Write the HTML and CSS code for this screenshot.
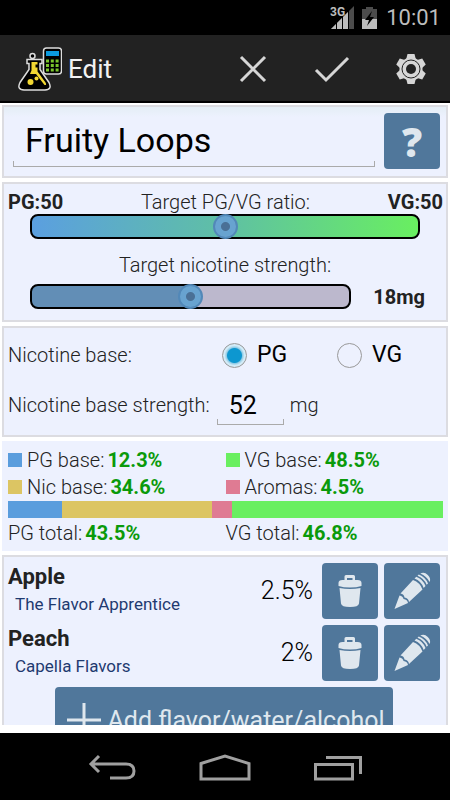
FILE: index.html
```html
<!DOCTYPE html>
<html lang="en">
<head>
    <meta charset="UTF-8">
    <meta name="viewport" content="width=device-width, initial-scale=1.0">
    <title>Edit - Fruity Loops</title>
    <link rel="stylesheet" href="styles.css">
</head>
<body>

<svg width="0" height="0" class="symbols">
    <symbol id="trash" viewBox="0 0 56 56">
        <path d="M22.500 17v-3.500q0-1.500 1.500-1.500h7.500q1.500 0 1.500 1.500V17h-2.500v-2H25v2z"/>
        <path d="M16.500 23v-3q0-3 4-3h15q4 0 4 3v3q-5 1.500-11.500 1.500T16.500 23z"/>
        <path d="M17.500 25q10.500 2 21 0l-1.500 15.500q-.5 3.500-9 3.500t-9-3.500z"/>
    </symbol>
    <symbol id="pencil" viewBox="0 0 56 56">
        <path d="M10.500 46l5-13.500q3.500.5 4 3.500 4 .5 4.500 4z"/>
        <path d="M16.500 30.500L29 17q7 2.500 9.500 9.500L25 39q-.5-4-4.500-4.500-.5-3.500-4-4z"/>
        <path d="M30.500 15.500l1.800-1.800q6.500 2.500 9.200 9.200L39.700 25q-2.500-7-9.200-9.500z"/>
        <path d="M33.500 12.700l1.300-1.300q6.500 2.500 9.200 9L42.700 21.700q-2.700-6.500-9.200-9z"/>
        <path d="M36.300 10.500q4-2 7.500 1.500t1.800 7q-3-6-9.300-8.500z"/>
    </symbol>
</svg>

<div class="status-bar">
    <svg class="signal" width="24" height="24" viewBox="0 0 24 24">
        <path d="M1 23L24 0v23z" fill="#4c4c4c"/>
        <path d="M1 23L18 6v17z" fill="#bdbdbd"/>
        <path d="M6.500 15v8M12.500 9v14M18.500 4v19" stroke="#000"/>
        <rect width="13" height="11" fill="#000"/>
        <text x="0" y="10">3G</text>
    </svg>
    <svg width="16" height="22" viewBox="0 0 16 22">
        <path d="M4 0h7v2h4v10H0V2h4z" fill="#4c4c4c"/>
        <path d="M0 12h15v10H0z" fill="#bdbdbd"/>
        <path d="M10 4L3 13h4l-2 6 7-9H8z" fill="#000"/>
    </svg>
    <span class="clock">10:01</span>
</div>

<header class="app-bar">
    <svg class="logo" width="44" height="44" viewBox="0 0 44 44">
        <rect x="25.500" y="1" width="18" height="26" rx="3" fill="#000" stroke="#ddd" stroke-width="1.500"/>
        <rect x="28" y="4" width="13" height="5" fill="#0b9ade"/>
        <path d="M28 14h13M28 18.500h13M28 23h13" stroke="#7ac52c" stroke-width="3" stroke-dasharray="3 1.800"/>
        <circle cx="14.500" cy="9" r="2.500" fill="#000" stroke="#ddd" stroke-width="1.500"/>
        <path d="M9 12.500h15v4h-2v6l9 13q3.500 7-4 7.500H6q-7.500-.5-4-7.500l9-13v-6H9z" fill="#000" stroke="#ddd" stroke-width="1.500"/>
        <path d="M13.500 15h6v2.500h-2v3h2v4l8 11q1.500 3-1 2.500l-8.500-11H12l1.500-3.500z" fill="#f1d733"/>
        <circle cx="12.500" cy="35" r="3" fill="#f1d733"/>
        <circle cx="18.500" cy="31.500" r="2" fill="#f1d733"/>
    </svg>
    <h1>Edit</h1>
    <div class="actions">
        <button type="button" aria-label="Cancel">
            <svg width="32" height="32" viewBox="0 0 32 32"><path d="M4 4l24 24M28 4L4 28"/></svg>
        </button>
        <button type="button" aria-label="Save">
            <svg width="36" height="32" viewBox="0 0 36 32"><path d="M2 17l10 10L34 5"/></svg>
        </button>
        <button type="button" aria-label="Settings">
            <svg width="32" height="32" viewBox="0 0 32 32">
                <g fill="#d6d6d6" stroke="none">
                    <circle cx="16" cy="16" r="11.500"/>
                    <path id="tooth" d="M11 7l1.500-6h7L21 7v18l-1.500 6h-7L11 25z"/>
                    <use href="#tooth" transform="rotate(60 16 16)"/>
                    <use href="#tooth" transform="rotate(120 16 16)"/>
                </g>
                <circle cx="16" cy="16" r="9" class="ring"/>
                <circle cx="16" cy="16" r="5" class="hole"/>
            </svg>
        </button>
    </div>
</header>

<main>
    <section class="card title-card">
        <input type="text" class="recipe-name" value="Fruity Loops" aria-label="Recipe name">
        <button type="button" class="square help">?</button>
    </section>

    <section class="card targets">
        <div class="ratio-head">
            <b>PG:50</b>
            <label for="ratio">Target PG/VG ratio:</label>
            <b>VG:50</b>
        </div>
        <input type="range" id="ratio" class="slider ratio" min="0" max="100" value="50">
        <label for="strength" class="strength-label">Target nicotine strength:</label>
        <div class="strength-row">
            <input type="range" id="strength" class="slider strength" min="0" max="36" value="18">
            <b>18mg</b>
        </div>
    </section>

    <section class="card nicotine">
        <div class="nic-row">
            <span class="nic-label">Nicotine base:</span>
            <label class="option"><input type="radio" name="base" checked>PG</label>
            <label class="option"><input type="radio" name="base">VG</label>
        </div>
        <div class="nic-row">
            <label for="base-strength">Nicotine base strength:</label>
            <input type="text" id="base-strength" value="52">
            <span>mg</span>
        </div>
    </section>

    <section class="card summary">
        <div class="legend">
            <div><i class="pg"></i>PG base:<b>12.3%</b></div>
            <div><i class="vg"></i>VG base:<b>48.5%</b></div>
            <div><i class="nic"></i>Nic base:<b>34.6%</b></div>
            <div><i class="aroma"></i>Aromas:<b>4.5%</b></div>
        </div>
        <div class="bar">
            <div class="pg" style="flex-grow: 12.3"></div>
            <div class="nic" style="flex-grow: 34.6"></div>
            <div class="aroma" style="flex-grow: 4.5"></div>
            <div class="vg" style="flex-grow: 48.5"></div>
        </div>
        <div class="legend totals">
            <div>PG total:<b>43.5%</b></div>
            <div>VG total:<b>46.8%</b></div>
        </div>
    </section>

    <section class="card flavors">
        <div class="flavor">
            <div class="flavor-name">
                <h2>Apple</h2>
                <p>The Flavor Apprentice</p>
            </div>
            <span class="percent">2.5%</span>
            <button type="button" class="square" aria-label="Delete Apple"><svg><use href="#trash"/></svg></button>
            <button type="button" class="square" aria-label="Edit Apple"><svg><use href="#pencil"/></svg></button>
        </div>
        <div class="flavor">
            <div class="flavor-name">
                <h2>Peach</h2>
                <p>Capella Flavors</p>
            </div>
            <span class="percent">2%</span>
            <button type="button" class="square" aria-label="Delete Peach"><svg><use href="#trash"/></svg></button>
            <button type="button" class="square" aria-label="Edit Peach"><svg><use href="#pencil"/></svg></button>
        </div>
        <button type="button" class="add">
            <svg width="34" height="34" viewBox="0 0 34 34"><path d="M0 17h34M17 0v34" stroke="#dfe7ee" stroke-width="3"/></svg>
            Add flavor/water/alcohol
        </button>
    </section>
</main>

<nav class="nav-bar">
    <button type="button" aria-label="Back">
        <svg width="48" height="28" viewBox="0 0 48 28"><path d="M11 2L3 10l8 8M3 10h35q8 0 8 7t-8 7H22"/></svg>
    </button>
    <button type="button" aria-label="Home">
        <svg width="52" height="28" viewBox="0 0 52 28"><path d="M2 9.500L26 2l24 7.500V25H2z"/></svg>
    </button>
    <button type="button" aria-label="Recent apps">
        <svg width="48" height="28" viewBox="0 0 48 28"><path d="M1.500 10.500h37V25h-37zM12 3.500h34.500V20"/></svg>
    </button>
</nav>

</body>
</html>
```
FILE: styles.css
```css
* {
    box-sizing: border-box;
}

body {
    display: flex;
    flex-direction: column;
    height: 100vh;
    margin: 0;
    background-color: #fff;
    color: #222;
    font-family: Roboto, "Liberation Sans", sans-serif;
    font-size: 20px;
    line-height: 24px;
}

h1, h2, p {
    margin: 0;
}

button {
    display: flex;
    align-items: center;
    justify-content: center;
    padding: 0;
    border: none;
    background: none;
    font-family: inherit;
    cursor: pointer;
}

b {
    color: #222;
    font-weight: bold;
}

.symbols {
    position: absolute;
}

/* status bar */
.status-bar {
    display: flex;
    flex: none;
    align-items: center;
    justify-content: flex-end;
    gap: 8px;
    height: 35px;
    padding-right: 9px;
    background-color: #000;
}

.signal text {
    fill: #bdbdbd;
    font-size: 12px;
    font-weight: bold;
}

.clock {
    color: #bdbdbd;
    font-size: 22px;
}

/* app bar */
.app-bar {
    display: flex;
    flex: none;
    align-items: center;
    height: 68px;
    padding: 2px 0 0 18px;
    background-color: #222;
    border-bottom: 2px solid #000;
}

.app-bar h1 {
    margin-left: 6px;
    color: #f3f3f3;
    font-size: 26px;
    font-weight: normal;
}

.actions {
    display: flex;
    margin-left: auto;
}

.actions button {
    width: 79px;
    height: 64px;
}

.actions svg {
    fill: none;
    stroke: #d6d6d6;
    stroke-width: 3;
}

.actions .ring {
    stroke: #222;
    stroke-width: 1;
}

.actions .hole {
    fill: #222;
    stroke: none;
}

/* cards */
main {
    display: flex;
    flex: 1;
    flex-direction: column;
    gap: 4px;
    min-height: 0;
    margin-bottom: 8px;
    padding: 2px 2px 0;
    overflow-y: auto;
    scrollbar-width: none;
}

.card {
    flex: none;
    padding: 6px 4px;
    background-color: #edf1fe;
    border: 2px solid #dcdce1;
    font-weight: 300;
}

.title-card {
    display: flex;
    justify-content: space-between;
    padding: 6px 6px 7px 9px;
    background-image: linear-gradient(#e4eef5, #edf1fe 10px);
}

.recipe-name, #base-strength {
    min-width: 0;
    border: none;
    outline: none;
    color: #000;
    font-family: inherit;
    background:
        linear-gradient(#aaa, #aaa) bottom / 100% 1px no-repeat,
        linear-gradient(#aaa, #aaa) left bottom / 1px 6px no-repeat,
        linear-gradient(#aaa, #aaa) right bottom / 1px 6px no-repeat;
}

.recipe-name {
    flex: 1;
    height: 54px;
    margin-right: 9px;
    padding: 0 12px;
    font-size: 34px;
}

.square {
    flex: none;
    width: 56px;
    height: 56px;
    background-color: #50779b;
    border-radius: 4px;
}

.square svg {
    width: 56px;
    height: 56px;
    fill: #dfe7ee;
}

.help {
    color: #dfe7ee;
    font-family: "Open Sans", sans-serif;
    font-size: 40px;
    font-weight: 800;
}

.targets {
    padding-bottom: 11px;
}

.ratio-head {
    display: flex;
    justify-content: space-between;
    margin-right: -1px;
}

.slider {
    display: block;
    height: 25px;
    margin: 0;
    appearance: none;
    border: 2px solid #000;
    border-radius: 8px;
}

.slider::-webkit-slider-thumb {
    width: 25px;
    height: 25px;
    appearance: none;
    background: radial-gradient(circle, #4a7096 4px, #68a3d0 5px);
    border: 2px solid #5288b8;
    border-radius: 50%;
}

.ratio {
    width: calc(100% - 44px);
    margin: 0 0 14px 22px;
    background: linear-gradient(to right, #5b9fe0, #5fc0a4 50%, #69ef60);
}

.strength-label {
    display: block;
    text-align: center;
}

.strength-row {
    display: flex;
    align-items: center;
    gap: 22px;
    margin: 7px 17px 0 22px;
}

.strength {
    flex: 1;
    min-width: 0;
    background: linear-gradient(to right, #628eb6 50%, #bcb8cd 50%);
}

.nicotine {
    padding: 2px 4px 5px;
}

.nic-row {
    display: flex;
    align-items: center;
    height: 50px;
}

.nic-label {
    flex: none;
    width: 214px;
}

.option {
    display: flex;
    flex: none;
    align-items: center;
    gap: 10px;
    width: 115px;
    color: #000;
    font-size: 23px;
    font-weight: normal;
}

.option input {
    width: 25px;
    height: 25px;
    margin: 0;
    appearance: none;
    border: 1px solid #999;
    border-radius: 50%;
}

.option input:checked {
    background: radial-gradient(circle, #0d97d0 7px, #8fcbe6 8px, #d3ebf7 10px);
}

#base-strength {
    width: 67px;
    height: 40px;
    margin: 0 6px 0 7px;
    padding: 0 12px;
    font-size: 25px;
}

.summary {
    padding: 6px 5px 4px 6px;
    border: none;
}

.legend {
    display: grid;
    grid-template-columns: 1fr 1fr;
    line-height: 27px;
}

.legend i {
    display: inline-block;
    width: 14px;
    height: 14px;
    margin-right: 5px;
}

.legend b {
    margin-left: 3px;
    color: #0a9a0a;
}

.pg { background-color: #5a9ddd; }
.vg { background-color: #69ef60; }
.nic { background-color: #dcc563; }
.aroma { background-color: #df7b93; }

.bar {
    display: flex;
    height: 17px;
    margin-bottom: 2px;
}

.flavors {
    padding-right: 6px;
}

.flavor {
    display: flex;
    align-items: center;
    gap: 6px;
    margin-bottom: 6px;
}

.flavor-name {
    flex: 1;
    align-self: flex-start;
}

.flavor h2 {
    font-size: 22px;
    line-height: 28px;
    color: #222;
}

.flavor p {
    padding-left: 7px;
    color: #1f3a70;
    font-size: 17px;
    font-weight: normal;
    line-height: 26px;
}

.percent {
    margin-right: 3px;
    color: #000;
    font-size: 25px;
}

.add {
    gap: 6px;
    width: 338px;
    height: 66px;
    margin: 0 auto;
    padding-left: 4px;
    background-color: #50779b;
    border-radius: 4px;
    color: #dfe7ee;
    font-size: 25px;
}

/* navigation bar */
.nav-bar {
    display: flex;
    flex: none;
    align-items: center;
    justify-content: center;
    height: 67px;
    padding-top: 2px;
    background-color: #000;
}

.nav-bar button {
    width: 113px;
    height: 64px;
}

.nav-bar svg {
    fill: none;
    stroke: #a0a0a0;
    stroke-width: 3;
}
```
